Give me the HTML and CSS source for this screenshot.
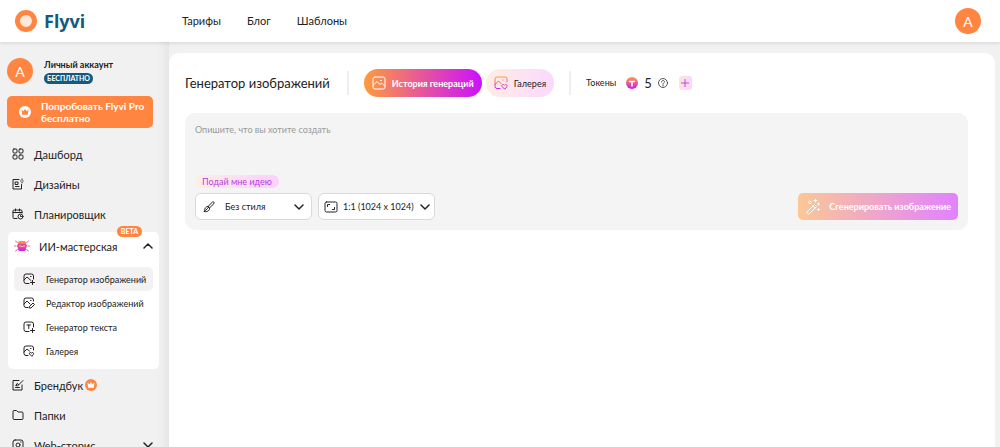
FILE: index.html
```html
<!DOCTYPE html>
<html lang="ru">
<head>
    <meta charset="UTF-8">
    <meta name="viewport" content="width=device-width, initial-scale=1.0">
    <title>Flyvi - Генератор изображений</title>
    <link rel="stylesheet" href="styles.css">
</head>
<body>
    <!-- shared gradient and icon shapes -->
    <svg class="defs" width="0" height="0" aria-hidden="true">
        <defs>
            <linearGradient id="sunset" x1="0" y1="0" x2="0" y2="1">
                <stop offset="0" stop-color="#ff9b3c"/>
                <stop offset="1" stop-color="#c81bf5"/>
            </linearGradient>
            <symbol id="chevron" viewBox="0 0 10 10">
                <path d="M1 3l4 4 4-4"/>
            </symbol>
        </defs>
    </svg>

    <header>
        <a class="logo" href="#">
            <svg width="22" height="22" viewBox="0 0 22 22"><circle cx="11" cy="11" r="8.500" fill="#ffe7dc" stroke="#ff8541" stroke-width="5"/></svg>
            <span>Flyvi</span>
        </a>
        <nav class="top-nav">
            <a href="#">Тарифы</a>
            <a href="#">Блог</a>
            <a href="#">Шаблоны</a>
        </nav>
        <button class="avatar" type="button">A</button>
    </header>

    <div class="layout">
        <aside class="sidebar">
            <div class="account">
                <span class="avatar">A</span>
                <div class="account-info">
                    <b>Личный аккаунт</b>
                    <span class="plan">БЕСПЛАТНО</span>
                </div>
            </div>
            <button class="pro-btn" type="button">
                <svg width="12" height="12" viewBox="0 0 12 12"><circle cx="6" cy="6" r="6" fill="#fff"/><path d="M2.500 3.800l1.900 1.500L6 3l1.600 2.300 1.900-1.500-.7 4.900H3.200z" fill="#ff8541"/></svg>
                <span>Попробовать Flyvi Pro бесплатно</span>
            </button>

            <nav class="menu">
                <a class="menu-item" href="#">
                    <svg class="icon" width="12" height="12" viewBox="0 0 12 12"><rect x="1" y="1" width="4" height="4" rx="1"/><rect x="7" y="1" width="4" height="4" rx="1"/><rect x="1" y="7" width="4" height="4" rx="1"/><rect x="7" y="7" width="4" height="4" rx="1"/></svg>
                    Дашборд
                </a>
                <a class="menu-item" href="#">
                    <svg class="icon" width="12" height="12" viewBox="0 0 12 12"><path d="M7 1.500H1v9.500h8.500V6.500M3.500 4H6v2.500H3.500zM3.500 8.500H7M10 1v1M10 4v1M8.500 3h.2M11 3h.2"/></svg>
                    Дизайны
                </a>
                <a class="menu-item" href="#">
                    <svg class="icon" width="12" height="12" viewBox="0 0 12 12"><path d="M5 10.500H2a1 1 0 0 1-1-1V3a1 1 0 0 1 1-1h7a1 1 0 0 1 1 1v2M1 4.500h9M3.500 1v2M7.500 1v2"/><circle cx="8.500" cy="8.500" r="2.500"/><path d="M8.500 7.500v1h1"/></svg>
                    Планировщик
                </a>
            </nav>

            <section class="workshop">
                <span class="beta">BETA</span>
                <button class="workshop-head" type="button">
                    <svg width="16" height="14" viewBox="0 0 16 14">
                        <path d="M1.500 2l2 1.500M14.500 2l-2 1.500M.5 7H2M15.500 7H14M1.500 12l2-1.500M14.500 12l-2-1.500" stroke="#e66a90" stroke-width="1"/>
                        <rect x="4" y="2" width="8" height="10" rx="2" fill="url(#sunset)"/>
                        <rect x="3" y="5" width="10" height="4" rx="2" fill="#e5449e"/>
                        <path d="M6 6.500v1M10 6.500v1M7.500 7.500h1" stroke="#ffd6a8" stroke-width="1"/>
                    </svg>
                    <span>ИИ-мастерская</span>
                    <svg class="chevron up" width="10" height="10"><use href="#chevron"/></svg>
                </button>
                <a class="sub-item active" href="#">
                    <svg class="icon" width="12" height="12" viewBox="0 0 12 12"><path d="M6 10.500H3a2 2 0 0 1-2-2V3a2 2 0 0 1 2-2h5.500a2 2 0 0 1 2 2v3M1 7l3-3 4 3.500M7.500 3.500h.5M9.500 7.500v4M7.500 9.500h4"/></svg>
                    Генератор изображений
                </a>
                <a class="sub-item" href="#">
                    <svg class="icon" width="12" height="12" viewBox="0 0 12 12"><path d="M5 10.500H3a2 2 0 0 1-2-2V3a2 2 0 0 1 2-2h5.500a2 2 0 0 1 2 2v1M1 7l3-3 3 3M7.500 3.500h.5M6.500 9.500l3.500-3.500 1.500 1.500L8 11H6.500z"/></svg>
                    Редактор изображений
                </a>
                <a class="sub-item" href="#">
                    <svg class="icon" width="12" height="12" viewBox="0 0 12 12"><path d="M6 10.500H3a2 2 0 0 1-2-2V3a2 2 0 0 1 2-2h5.500a2 2 0 0 1 2 2v3M4 4h3.500M5.750 4v3.500M9.500 7.500v4M7.500 9.500h4"/></svg>
                    Генератор текста
                </a>
                <a class="sub-item" href="#">
                    <svg class="icon" width="12" height="12" viewBox="0 0 12 12"><path d="M5 10.500H3a2 2 0 0 1-2-2V3a2 2 0 0 1 2-2h5.500a2 2 0 0 1 2 2v2M1 7l3-3 2.500 2M7.500 3.500h.5M8.500 11L6.500 9c-.6-1.300 1-2.200 2-1 1-1.200 2.600-.3 2 1z"/></svg>
                    Галерея
                </a>
            </section>

            <nav class="menu">
                <a class="menu-item" href="#">
                    <svg class="icon" width="12" height="12" viewBox="0 0 12 12"><path d="M7 1.500H1v9.500h9V6M3.500 8.500h4M4 6.500l1.500.5L11 1.500M4 6.500l1-2 1.500 1"/></svg>
                    Брендбук
                    <svg class="crown" width="12" height="12" viewBox="0 0 12 12"><circle cx="6" cy="6" r="6" fill="#ff8541"/><path d="M2.500 3.800l1.900 1.500L6 3l1.600 2.300 1.900-1.500-.7 4.900H3.200z" fill="#fff"/></svg>
                </a>
                <a class="menu-item" href="#">
                    <svg class="icon" width="12" height="12" viewBox="0 0 12 12"><path d="M1 2.500a1 1 0 0 1 1-1h2.500L6 3h4a1 1 0 0 1 1 1v5.500a1 1 0 0 1-1 1H2a1 1 0 0 1-1-1z"/></svg>
                    Папки
                </a>
                <a class="menu-item" href="#">
                    <svg class="icon" width="12" height="12" viewBox="0 0 12 12"><rect x="1" y="1" width="10" height="10" rx="2"/><circle cx="6" cy="6" r="2"/><path d="M8.500 3h.5"/></svg>
                    Web-сторис
                    <svg class="chevron last" width="10" height="10"><use href="#chevron"/></svg>
                </a>
            </nav>
        </aside>

        <main>
            <div class="toolbar">
                <h1>Генератор изображений</h1>
                <div class="tabs">
                    <button class="tab history" type="button">
                        <svg width="14" height="14" viewBox="0 0 14 14"><rect x="1" y="1" width="12" height="12" rx="2"/><path d="M1 9.500l4-4 3 3 1.500-1.500L13 10M8.500 4.500h1"/></svg>
                        История генераций
                    </button>
                    <button class="tab gallery" type="button">
                        <svg width="14" height="14" viewBox="0 0 14 14"><path d="M6 12.500H3a2 2 0 0 1-2-2V3a2 2 0 0 1 2-2h8a2 2 0 0 1 2 2v3M1 8.500l3.500-3.500L7 7.500M8.500 4h.5M10.500 13L8 10.500c-.9-1.700 1.300-3 2.500-1.300 1.200-1.700 3.400-.4 2.500 1.300z" stroke="url(#sunset)"/></svg>
                        Галерея
                    </button>
                </div>
                <div class="tokens">
                    <span>Токены</span>
                    <svg width="12" height="12" viewBox="0 0 12 12"><circle cx="6" cy="6" r="6" fill="url(#sunset)"/><path d="M3.500 4.500h5M6 4.500V9" stroke="#fff" stroke-width="1.500"/></svg>
                    <span class="count">5</span>
                    <svg class="help" width="10" height="10" viewBox="0 0 10 10"><circle cx="5" cy="5" r="4.500"/><path d="M3.500 4c0-2 3-2 3-.2C6.500 5 5 4.800 5 6.200M5 7.200v.8"/></svg>
                    <button class="add" type="button" aria-label="Добавить токены">
                        <svg width="8" height="8" viewBox="0 0 8 8"><path d="M4 0v8M0 4h8"/></svg>
                    </button>
                </div>
            </div>

            <form class="prompt">
                <textarea aria-label="Описание изображения" placeholder="Опишите, что вы хотите создать"></textarea>
                <button class="idea" type="button">Подай мне идею</button>
                <div class="controls">
                    <label class="select style-select">
                        <svg class="icon" width="12" height="12" viewBox="0 0 12 12"><path d="M5 5.500L9.500 1c1-.7 2 .5 1.500 1.500L6.500 7zM5 5.500L6.500 7c.2 1.300-.3 2.300-1.500 3-1 .7-2.500.8-4 .5.8-.7.6-1.500 1-2.800C2.500 6.300 3.700 5.400 5 5.500zM2.500 9.500l2-2"/></svg>
                        <select aria-label="Стиль"><option>Без стиля</option></select>
                        <svg class="chevron" width="10" height="10"><use href="#chevron"/></svg>
                    </label>
                    <label class="select size-select">
                        <svg class="icon" width="14" height="12" viewBox="0 0 14 12"><rect x="1" y="1" width="12" height="10" rx="1.500"/><path d="M3.500 5.500v-2h2M10.500 6.500v2h-2"/></svg>
                        <select aria-label="Размер"><option>1:1 (1024 x 1024)</option></select>
                        <svg class="chevron" width="10" height="10"><use href="#chevron"/></svg>
                    </label>
                    <button class="generate" type="button">
                        <svg width="14" height="16" viewBox="0 0 14 16"><path d="M1 13l7.500-7.500 2 2L3 15zM7 7l2 2M4 2l1.500 1.500L4 5 2.500 3.500zM9.500 0v3M8 1.500h3M12.500 4v2M11.500 5h2M12.500 9.500v2M11.500 10.500h2"/></svg>
                        Сгенерировать изображение
                    </button>
                </div>
            </form>
        </main>
    </div>
</body>
</html>
```
FILE: styles.css
```css
* {
    box-sizing: border-box;
}
body {
    margin: 0;
    height: 100vh;
    display: flex;
    flex-direction: column;
    overflow: hidden;
    font-family: Lato, "Noto Sans", sans-serif;
    font-size: 11px;
    color: #222;
    background-color: #f1f1f1;
}
.defs {
    position: absolute;
}
svg {
    flex: none;
    fill: none;
    stroke-linecap: round;
    stroke-linejoin: round;
}
a {
    color: inherit;
    text-decoration: none;
}
button, select, textarea {
    font: inherit;
    color: inherit;
    border: none;
    padding: 0;
    background: none;
}
button {
    cursor: pointer;
}

/* Header */
header {
    display: flex;
    align-items: center;
    flex: none;
    height: 42px;
    padding: 0 19px 0 15px;
    background-color: #fff;
    box-shadow: 0 1px 4px rgba(0, 0, 0, 0.12);
    position: relative;
}
.logo {
    display: flex;
    align-items: center;
    gap: 7px;
    width: 167px;
    font-family: "Noto Sans", sans-serif;
    font-size: 18px;
    font-weight: 700;
    color: #155a7c;
}
.top-nav {
    display: flex;
    gap: 26px;
    flex: 1;
    padding-bottom: 2px;
}
.avatar {
    display: flex;
    align-items: center;
    justify-content: center;
    width: 26px;
    height: 26px;
    border-radius: 50%;
    background-color: #ff8541;
    color: #fff;
    font-size: 14px;
}

.layout {
    display: flex;
    flex: 1;
    min-height: 0;
}

/* Sidebar */
.sidebar {
    width: 169px;
    flex: none;
    padding: 16px 10px 0 7px;
    overflow: hidden;
    background: linear-gradient(90deg, #f1f1f1 158px, #e6e6e6);
}
.account {
    display: flex;
    align-items: center;
    gap: 11px;
    margin-bottom: 12px;
}
.account-info {
    display: flex;
    flex-direction: column;
    align-items: flex-start;
    gap: 3px;
    font-size: 9px;
}
.plan {
    padding: 0 3px;
    line-height: 11px;
    border-radius: 6px;
    background-color: #155a7c;
    color: #fff;
    font-size: 7px;
    font-weight: 700;
}
.pro-btn {
    display: flex;
    align-items: center;
    gap: 10px;
    width: 146px;
    height: 32px;
    padding-left: 12px;
    border-radius: 5px;
    background-color: #ff8541;
    color: #fff;
    font-size: 10px;
    font-weight: 700;
    line-height: 12px;
    text-align: left;
}
.icon {
    stroke: #222;
    stroke-width: 1;
}
.menu {
    padding-left: 5px;
    margin-top: 11px;
}
.menu-item {
    display: flex;
    align-items: center;
    gap: 10px;
    height: 30px;
}
.menu-item .crown {
    margin-left: -8px;
}
.chevron {
    stroke: #222;
    stroke-width: 1.5;
}
.up {
    transform: rotate(180deg);
}
.last {
    margin-left: auto;
    margin-right: 6px;
}
.workshop {
    position: relative;
    width: 151px;
    margin: 3px 0 0 1px;
    padding: 0 6px 6px;
    border-radius: 5px;
    background-color: #fff;
}
.workshop + .menu {
    margin-top: 1px;
}
.beta {
    position: absolute;
    top: -6px;
    right: 17px;
    padding: 0 4px;
    border-radius: 6px;
    background-color: #ff8541;
    color: #fff;
    font-size: 7px;
    font-weight: 700;
    line-height: 11px;
}
.workshop-head {
    display: flex;
    align-items: center;
    gap: 9px;
    width: 100%;
    height: 28px;
    margin-bottom: 7px;
}
.workshop-head .chevron {
    margin-left: auto;
}
.sub-item {
    display: flex;
    align-items: center;
    gap: 11px;
    height: 24px;
    padding-left: 9px;
    border-radius: 5px;
    font-size: 9px;
    white-space: nowrap;
}
.active {
    background-color: #f3f1f1;
}

/* Main panel */
main {
    flex: 1;
    min-width: 0;
    margin: 11px 5px 0 0;
    padding: 16px 27px 0 16px;
    border-radius: 10px 10px 0 0;
    background-color: #fff;
}
.toolbar {
    display: flex;
    align-items: center;
    height: 28px;
}
h1 {
    margin: 0;
    padding-right: 17px;
    font-size: 13px;
    font-weight: 400;
    line-height: 24px;
    border-right: 2px solid #eee;
}
.tabs {
    display: flex;
    gap: 4px;
    padding: 0 15px;
}
.tab {
    display: flex;
    align-items: center;
    gap: 6px;
    height: 28px;
    padding: 0 8px;
    border-radius: 14px;
    font-size: 9px;
}
.tab svg {
    stroke: #fff;
}
.history {
    background: linear-gradient(90deg, #ff9b3c, #cc10ff);
    color: #fff;
    font-weight: 700;
}
.gallery {
    background: linear-gradient(90deg, #ffeee3, #fbd8ff);
}
.tokens {
    display: flex;
    align-items: center;
    gap: 6px;
    padding-left: 15px;
    border-left: 2px solid #eee;
    font-size: 9px;
    line-height: 24px;
}
.tokens span:first-child {
    margin-right: 4px;
}
.count {
    font-size: 13px;
}
.help {
    stroke: #555;
}
.add {
    display: flex;
    align-items: center;
    justify-content: center;
    width: 13px;
    height: 14px;
    margin-left: 5px;
    border-radius: 3px;
    background: linear-gradient(90deg, #ffe5dc, #f9d5ff);
}
.add svg {
    stroke: #c04be0;
}

.prompt {
    display: flex;
    flex-direction: column;
    align-items: flex-start;
    margin-top: 16px;
    padding: 10px;
    border-radius: 10px;
    background-color: #f4f4f4;
}
textarea {
    width: 100%;
    height: 52px;
    resize: none;
    outline: none;
    font-size: 9px;
    line-height: 14px;
}
textarea::placeholder {
    color: #999;
}
.idea {
    padding: 0 7px;
    border-radius: 7px;
    background: linear-gradient(90deg, #ffeee3, #fbd0ff);
    color: #b43fe0;
    font-size: 9px;
    line-height: 13px;
}
.controls {
    display: flex;
    gap: 6px;
    width: 100%;
    margin-top: 5px;
}
.select {
    display: flex;
    align-items: center;
    width: 117px;
    height: 27px;
    padding: 0 7px;
    border: 1px solid #d9d9d9;
    border-radius: 6px;
    background-color: #fff;
    font-size: 9px;
}
.select select {
    flex: 1;
    min-width: 0;
    appearance: none;
    outline: none;
}
.style-select select {
    padding-left: 10px;
}
.size-select {
    padding: 0 4px 0 5px;
}
.size-select select {
    padding-left: 5px;
}
.generate {
    display: flex;
    align-items: center;
    gap: 9px;
    height: 27px;
    margin-left: auto;
    padding: 0 7px 0 8px;
    border-radius: 5px;
    background: linear-gradient(90deg, #fbc796, #e182ff);
    color: #fff;
    font-size: 9px;
    font-weight: 700;
}
.generate svg {
    stroke: #fff;
}
```
